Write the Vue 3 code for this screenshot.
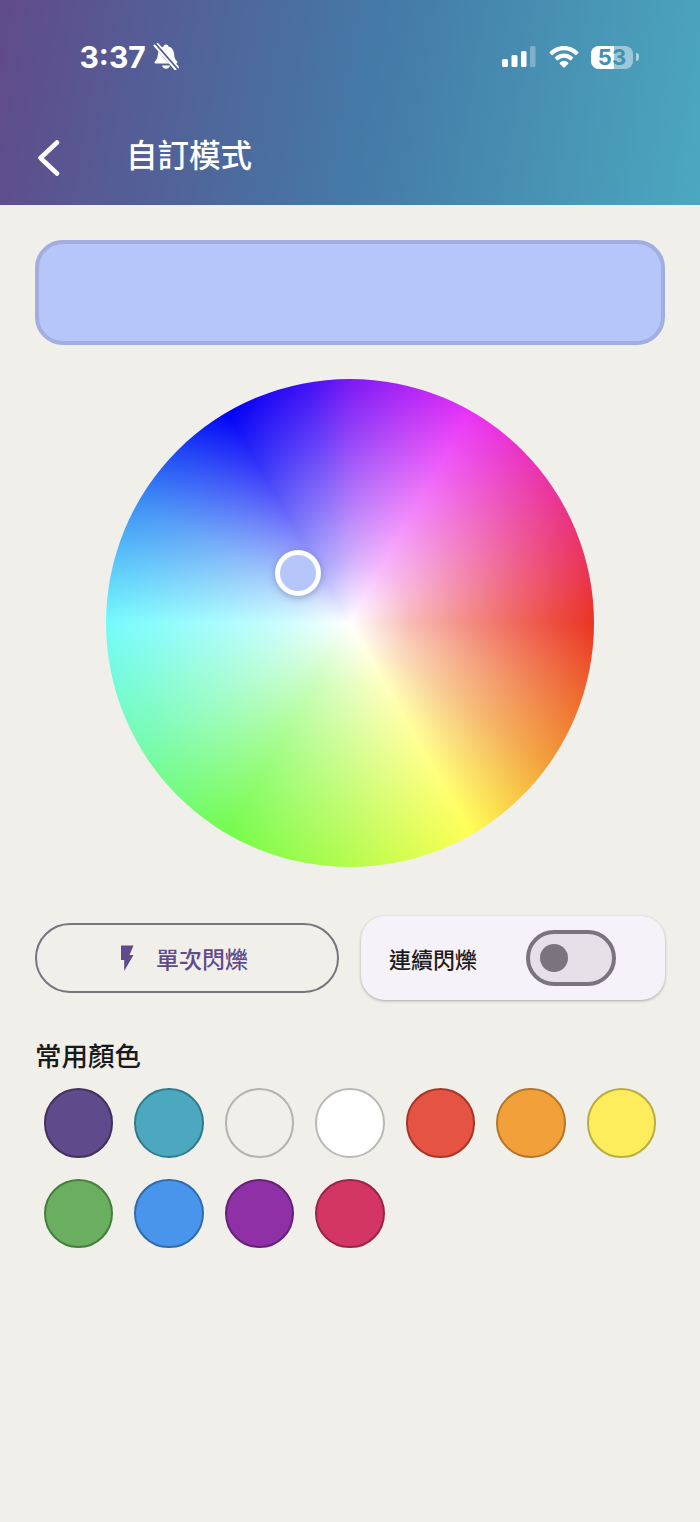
<template>
  <div class="page">
    <header class="header">
      <div class="status-bar">
        <div class="status-left">
          <span class="time">3:37</span>
          <svg class="bell" width="26" height="27" viewBox="0 0 26 27">
            <path d="M13 1.500c1.400 0 2.200.9 2.500 2 3.600 1 5.400 4 5.600 7.600.2 3.200.8 5.400 3 7.400.8.8.4 2-.8 2H2.700c-1.200 0-1.600-1.200-.8-2 2.200-2 2.800-4.200 3-7.400C5.100 7.500 6.900 4.500 10.500 3.500c.3-1.100 1.100-2 2.500-2z" fill="#fff"/>
            <path d="M9 22.500h8c-.4 2-2 3.200-4 3.200s-3.600-1.200-4-3.200z" fill="#fff"/>
            <path d="M2.500 1.500l21 24" stroke="#4d5e92" stroke-width="5" fill="none"/>
            <path d="M1.500 2.500l21 24" stroke="#fff" stroke-width="2" stroke-linecap="round" fill="none"/>
            <path d="M4.500 .5l21 24" stroke="#fff" stroke-width="1.600" stroke-linecap="round" fill="none"/>
          </svg>
        </div>
        <div class="status-right">
          <svg width="34" height="22" viewBox="0 0 34 22">
            <rect x="0" y="13" width="6" height="8" rx="1.500" fill="#fff"/>
            <rect x="9.500" y="9" width="6" height="12" rx="1.500" fill="#fff"/>
            <rect x="19" y="5" width="5.500" height="16" rx="1.500" fill="#fff"/>
            <rect x="28" y="0" width="5.500" height="21" rx="1.500" fill="#fff" fill-opacity="0.3"/>
          </svg>
          <svg width="30" height="22" viewBox="0 0 30 22">
            <path d="M15 0C9.300 0 4.300 2.300.7 6c-.3.300-.3.700 0 1l2 2c.3.300.7.300 1 0C6.600 6 10.600 4.200 15 4.200S23.400 6 26.300 9c.3.300.7.300 1 0l2-2c.3-.3.3-.7 0-1C25.700 2.300 20.700 0 15 0z" fill="#fff"/>
            <path d="M15 7.600c-3.500 0-6.700 1.400-9 3.700-.3.300-.3.700 0 1l2 2c.3.300.7.300 1 0 1.600-1.500 3.700-2.500 6-2.500s4.400 1 6 2.500c.3.300.7.300 1 0l2-2c.3-.3.3-.7 0-1-2.300-2.300-5.500-3.700-9-3.700z" fill="#fff"/>
            <path d="M15 15c-1.700 0-3.200.7-4.300 1.700-.3.300-.3.700 0 1l3.800 3.800c.3.300.7.300 1 0l3.800-3.800c.3-.3.3-.7 0-1C18.200 15.700 16.700 15 15 15z" fill="#fff"/>
          </svg>
          <div class="battery">
            <div class="battery-body">
              <div class="battery-fill"></div>
              <span class="battery-text">53</span>
            </div>
            <div class="battery-tip"></div>
          </div>
        </div>
      </div>
      <div class="nav-bar">
        <svg class="back" width="22" height="36" viewBox="0 0 22 36">
          <path d="M19 2.500L2.500 18 19 33.500" fill="none" stroke="#fff" stroke-width="4.500" stroke-linecap="round" stroke-linejoin="round"/>
        </svg>
        <h1 class="title">自訂模式</h1>
      </div>
    </header>

    <main class="content">
      <div class="preview"></div>

      <div class="wheel">
        <div class="wheel-white"></div>
        <div class="marker"></div>
      </div>

      <div class="controls">
        <button class="flash-btn">
          <svg width="14" height="26" viewBox="0 0 14 26">
            <path d="M1 0.500H13.500L9.500 10H13.500L4.200 26V15H1z" fill="#5f4a8b"/>
          </svg>
          <span>單次閃爍</span>
        </button>
        <div class="switch-card">
          <span class="switch-label">連續閃爍</span>
          <div class="switch">
            <div class="switch-thumb"></div>
          </div>
        </div>
      </div>

      <h2 class="section-title">常用顏色</h2>
      <div class="swatches">
        <div
          v-for="c in colors"
          :key="c.fill"
          class="swatch"
          :style="{ background: c.fill, borderColor: c.border }"
        ></div>
      </div>
    </main>
  </div>
</template>

<script setup>
const colors = [
  { fill: "#5f4a8b", border: "#42315f" },
  { fill: "#4ba8bf", border: "#2f7a8c" },
  { fill: "#f0efea", border: "#b4b3af" },
  { fill: "#ffffff", border: "#b8b8b5" },
  { fill: "#e55342", border: "#a83528" },
  { fill: "#f2a03a", border: "#b5752a" },
  { fill: "#fdec5c", border: "#b9ad40" },
  { fill: "#6aae5f", border: "#447f3d" },
  { fill: "#4a95ec", border: "#2f6cad" },
  { fill: "#8f30a6", border: "#66207a" },
  { fill: "#d33663", border: "#9a2347" }
];
</script>

<style>
html, body {
  margin: 0;
  background: #f0efea;
}
</style>

<style scoped>
.page {
  width: 700px;
  height: 1522px;
  background: #f0efea;
  font-family: "Noto Sans CJK TC", "Noto Sans", sans-serif;
  overflow: hidden;
}

/* Header */
.header {
  height: 205px;
  box-sizing: border-box;
  background: linear-gradient(100deg, #604a8a 0%, #4479a6 52%, #4ba8bf 100%);
}
.status-bar {
  height: 112px;
  display: flex;
  justify-content: space-between;
  align-items: flex-start;
  padding: 44px 61px 0 79.5px;
  box-sizing: border-box;
}
.status-left {
  display: flex;
  align-items: center;
  gap: 7px;
  margin-top: -1px;
}
.time {
  font-family: Inter, sans-serif;
  font-weight: 700;
  font-size: 30px;
  line-height: 26px;
  color: #fff;
}
.status-right {
  display: flex;
  align-items: center;
  gap: 13px;
  height: 24px;
  margin-top: 1px;
}
.battery {
  display: flex;
  align-items: center;
  gap: 3px;
  margin-left: -1px;
}
.battery-body {
  position: relative;
  width: 42px;
  height: 23px;
  border-radius: 8px;
  background: rgba(255, 255, 255, 0.45);
  display: flex;
  align-items: center;
  justify-content: center;
}
.battery-fill {
  position: absolute;
  left: 0;
  top: 0;
  bottom: 0;
  width: 55%;
  border-radius: 8px 0 0 8px;
  background: #fff;
}
.battery-text {
  position: relative;
  font-family: Inter, sans-serif;
  font-weight: 700;
  font-size: 22px;
  line-height: 23px;
  color: #4490b0;
}
.battery-tip {
  width: 3px;
  height: 8px;
  border-radius: 0 3px 3px 0;
  background: rgba(255, 255, 255, 0.55);
}
.nav-bar {
  display: flex;
  align-items: center;
  padding-left: 38px;
  height: 92px;
}
.title {
  margin: 0 0 8px 66px;
  font-size: 31.5px;
  font-weight: 500;
  line-height: 1;
  color: #fff;
}

/* Content */
.content {
  padding: 35px 35px 0;
}
.preview {
  height: 105px;
  box-sizing: border-box;
  border: 4px solid #a3aee0;
  border-radius: 28px;
  background: #b6c6fa;
}
.wheel {
  position: relative;
  width: 488px;
  height: 488px;
  margin: 34px auto 0;
  border-radius: 50%;
  background: conic-gradient(
    #7a18f5 0deg,
    #ea33f7 30deg,
    #ea3390 60deg,
    #ea3323 90deg,
    #f29c38 125deg,
    #ffff54 150deg,
    #b5fb4c 180deg,
    #75fb4c 210deg,
    #75fbb0 240deg,
    #75fbfd 270deg,
    #3c8df5 300deg,
    #0000f5 330deg,
    #4010f5 350deg,
    #7a18f5 360deg
  );
}
.wheel-white {
  width: 100%;
  height: 100%;
  border-radius: 50%;
  background: radial-gradient(
    circle closest-side,
    #fff 0%,
    rgba(255, 255, 255, 0.66) 25%,
    rgba(255, 255, 255, 0.42) 50%,
    rgba(255, 255, 255, 0.2) 75%,
    rgba(255, 255, 255, 0) 100%
  );
}
.marker {
  position: absolute;
  left: 169px;
  top: 171px;
  width: 46px;
  height: 46px;
  box-sizing: border-box;
  border: 5px solid #fff;
  border-radius: 50%;
  background: #b6c6fa;
  box-shadow: 0 2px 7px rgba(40, 60, 110, 0.35);
}

.controls {
  display: flex;
  align-items: center;
  justify-content: space-between;
  margin-top: 49px;
}
.flash-btn {
  width: 304px;
  height: 70px;
  box-sizing: border-box;
  border: 2px solid #79747e;
  border-radius: 35px;
  background: transparent;
  display: flex;
  align-items: center;
  justify-content: center;
  gap: 22px;
  padding: 0 6px 0 0;
  font-family: inherit;
  font-size: 23px;
  font-weight: 500;
  color: #5f4a8b;
}
.switch-card {
  width: 304px;
  height: 84px;
  box-sizing: border-box;
  padding: 0 28px;
  display: flex;
  align-items: center;
  gap: 49px;
  border-radius: 24px;
  background: #f6f2f9;
  box-shadow: 0 1px 3px rgba(0, 0, 0, 0.3);
}
.switch-label {
  font-size: 22px;
  font-weight: 500;
  color: #1d1b20;
}
.switch {
  width: 90px;
  height: 56px;
  box-sizing: border-box;
  border: 4px solid #79747e;
  border-radius: 28px;
  background: #e6e0e9;
  display: flex;
  align-items: center;
  padding-left: 10px;
}
.switch-thumb {
  width: 28px;
  height: 28px;
  border-radius: 50%;
  background: #79747e;
}

.section-title {
  margin: 36px 0 0;
  font-size: 26.5px;
  font-weight: 500;
  line-height: 38px;
  color: #1a1a1a;
}
.swatches {
  display: flex;
  flex-wrap: wrap;
  column-gap: 21px;
  row-gap: 21px;
  padding: 14px 8.5px 0;
}
.swatch {
  width: 69.5px;
  height: 69.5px;
  box-sizing: border-box;
  border: 2px solid;
  border-radius: 50%;
}
</style>
